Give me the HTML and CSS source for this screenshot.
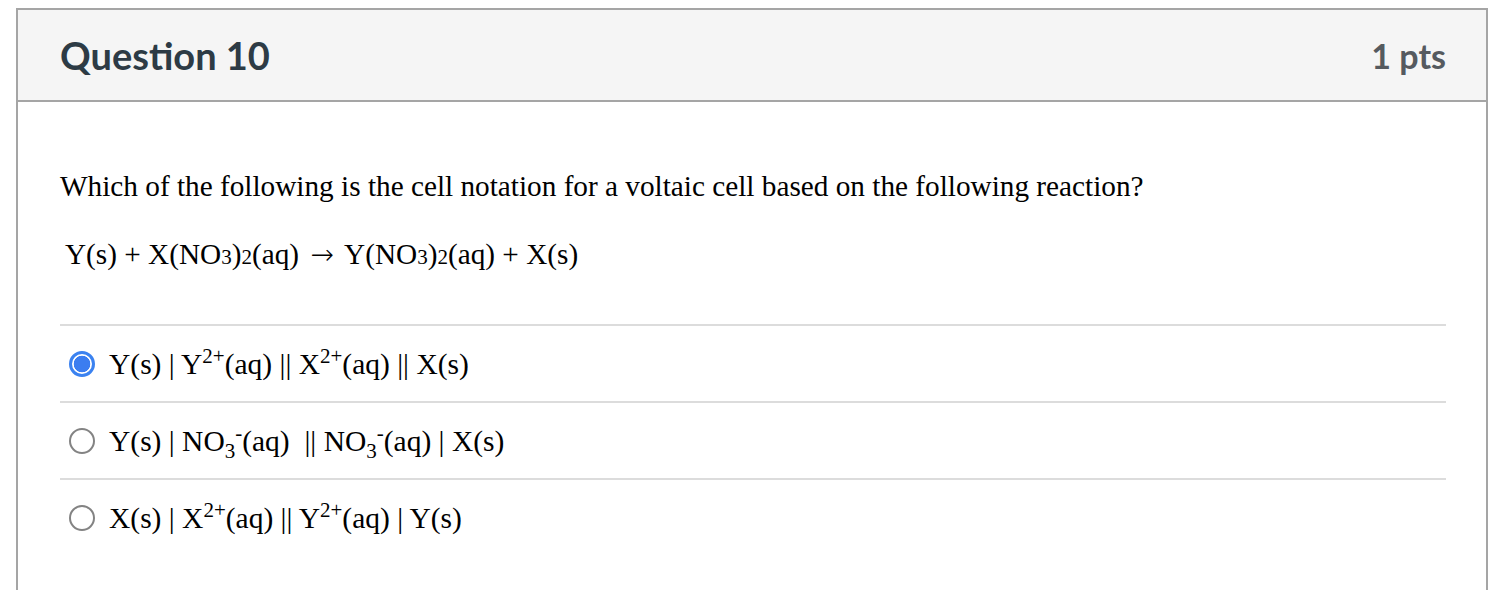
FILE: index.html
```html
<!DOCTYPE html>
<html>
<head>
<meta charset="utf-8">
<link rel="stylesheet" href="styles.css">
</head>
<body>
<div class="card">
  <div class="header">
    <h2 class="title">Question 10</h2>
    <div class="pts">1 pts</div>
  </div>
  <div class="body">
    <p class="prompt">Which of the following is the cell notation for a voltaic cell based on the following reaction?</p>
    <p class="equation">Y(s) + X(NO<span class="small">3</span>)<span class="small">2</span>(aq) <span class="arrow">→</span> Y(NO<span class="small">3</span>)<span class="small">2</span>(aq) + X(s)</p>
    <div class="answers">
      <label class="answer">
        <span class="radio checked"></span>
        <span class="atext">Y(s) | Y<sup>2+</sup>(aq) || X<sup>2+</sup>(aq) || X(s)</span>
      </label>
      <label class="answer">
        <span class="radio"></span>
        <span class="atext">Y(s) | NO<sub>3</sub><sup>-</sup>(aq)&nbsp; || NO<sub>3</sub><sup>-</sup>(aq) | X(s)</span>
      </label>
      <label class="answer">
        <span class="radio"></span>
        <span class="atext">X(s) | X<sup>2+</sup>(aq) || Y<sup>2+</sup>(aq) | Y(s)</span>
      </label>
    </div>
  </div>
</div>
</body>
</html>
```
FILE: styles.css
```css
html, body {
  margin: 0;
  padding: 0;
  background: #fff;
}
body {
  padding: 8px 10px 0 16px;
}
.card {
  width: 1472px;
  box-sizing: border-box;
  border: 2px solid #a5a5a5;
  border-bottom: none;
  height: 600px;
}
.header {
  background: #f5f5f5;
  border-bottom: 2px solid #a5a5a5;
  height: 92px;
  box-sizing: border-box;
  display: flex;
  align-items: center;
  justify-content: space-between;
  padding: 0 40px 0 42px;
}
.title {
  margin: 0;
  font-family: Lato, "Open Sans", sans-serif;
  font-weight: 700;
  font-size: 38px;
  color: #2d3b45;
}
.pts {
  font-family: Lato, "Open Sans", sans-serif;
  font-weight: 700;
  font-size: 34px;
  color: #555a5f;
}
.body {
  padding: 64px 40px 0 42px;
  font-family: "Liberation Serif", "Times New Roman", serif;
  color: #000;
}
.prompt {
  margin: 0;
  font-size: 29.25px;
  line-height: 40px;
}
.equation {
  margin: 28px 0 0 0;
  padding-left: 5px;
  font-size: 29.25px;
  line-height: 40px;
}
.arrow {
  font-family: "DejaVu Sans", sans-serif;
  font-weight: 200;
  font-size: 28px;
  line-height: 0;
  margin: 0 4px;
}
.small {
  font-size: 21px;
}
.answers {
  margin-top: 47px;
}
.answer {
  display: flex;
  align-items: center;
  gap: 14px;
  height: 75px;
  border-top: 2px solid #dcdcdc;
  padding-left: 9px;
}
.radio {
  width: 26px;
  height: 26px;
  box-sizing: border-box;
  border-radius: 50%;
  border: 2px solid #838383;
  background: #fff;
  flex: none;
}
.radio.checked {
  border: 3px solid #3b82f0;
  background: radial-gradient(circle, #3b7df0 0 8px, #fff 8.6px);
}
.atext {
  font-size: 29.5px;
  line-height: 40px;
}
sup, sub {
  font-size: 21px;
  line-height: 0;
}
```
